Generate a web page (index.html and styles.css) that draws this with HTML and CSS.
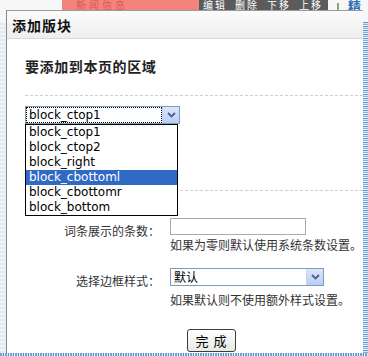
FILE: index.html
```html
<!DOCTYPE html>
<html lang="zh-CN">
<head>
  <meta charset="UTF-8" />
  <title>添加版块</title>
  <link rel="stylesheet" href="styles.css">
</head>
<body>
  <div class="page">
    <div class="topbar">
      <div class="tb-blank"></div>
      <div class="tb-news">新闻信息</div>
      <div class="tb-tools"><span>编辑</span><span>删除</span><span>下移</span><span>上移</span></div>
      <div class="tb-gap"><i class="tb-tick"></i></div>
      <div class="tb-link">精</div>
    </div>
    <div class="page-mid">
      <div class="gutter"></div>
      <div class="page-main"></div>
      <div class="stripe"></div>
    </div>
    <div class="stripe-bottom"></div>
  </div>

  <div class="dialog">
    <div class="dlg-title">添加版块</div>
    <div class="dlg-body">
      <h3 class="dlg-heading">要添加到本页的区域</h3>
      <div class="rule"></div>

      <div class="combo combo-area">
        <div class="combo-text"><span class="focus">block_ctop1</span></div>
        <div class="combo-btn"><svg width="9" height="6" viewBox="0 0 9 6"><path d="M1 1 L4.5 4.5 L8 1" fill="none" stroke="#4d6185" stroke-width="1.8"/></svg></div>
        <ul class="combo-list">
          <li>block_ctop1</li>
          <li>block_ctop2</li>
          <li>block_right</li>
          <li class="on">block_cbottoml</li>
          <li>block_cbottomr</li>
          <li>block_bottom</li>
        </ul>
      </div>

      <div class="rule rule-second"></div>

      <div class="form-row">
        <label class="form-label">词条展示的条数：</label>
        <div class="form-field">
          <div class="text-input"></div>
          <div class="hint">如果为零则默认使用系统条数设置。</div>
        </div>
      </div>

      <div class="form-row form-row-second">
        <label class="form-label">选择边框样式：</label>
        <div class="form-field">
          <div class="combo combo-style">
            <div class="combo-text">默认</div>
            <div class="combo-btn"><svg width="9" height="6" viewBox="0 0 9 6"><path d="M1 1 L4.5 4.5 L8 1" fill="none" stroke="#4d6185" stroke-width="1.8"/></svg></div>
          </div>
          <div class="hint hint-second">如果默认则不使用额外样式设置。</div>
        </div>
      </div>

      <div class="actions">
        <button class="btn">完 成</button>
      </div>
    </div>
  </div>
</body>
</html>
```

FILE: styles.css
```css
body {
  margin: 0;
  width: 368px;
  height: 356px;
  overflow: hidden;
  position: relative;
  font-family: "Noto Sans CJK SC", "DejaVu Sans", sans-serif;
  font-size: 12px;
  color: #333;
}
.page {
  height: 356px;
  display: flex;
  flex-direction: column;
  background: #f6f7f8;
}
.topbar {
  display: flex;
  height: 22px;
  font-size: 10px;
  line-height: 10px;
}
.tb-blank {
  width: 62px;
}
.tb-news {
  width: 137px;
  background: #f2837f;
  color: #dc5a56;
  padding-left: 14px;
  letter-spacing: 3px;
  box-sizing: border-box;
}
.tb-tools {
  width: 129px;
  background: #5b5b5b;
  color: #fff;
  display: flex;
  gap: 8px;
  padding-left: 4px;
  box-sizing: border-box;
  letter-spacing: 2px;
}
.tb-gap {
  width: 20px;
}
.tb-tick {
  display: block;
  width: 2px;
  height: 8px;
  margin: 3px 0 0 9px;
  background: #8fa67a;
}
.tb-link {
  color: #2f6eb3;
  font-weight: bold;
  font-size: 13px;
  line-height: 11px;
}
.page-mid {
  flex: 1;
  display: flex;
}
.gutter {
  width: 6px;
  background: repeating-linear-gradient(0deg, #e1ebf5 0 2px, #eef4fa 2px 4px);
}
.page-main {
  flex: 1;
  background: #fff;
}
.stripe {
  width: 5px;
  background: repeating-linear-gradient(0deg, #7fb0de 0 1px, #d8e8f6 1px 2px, #5f98cf 2px 3px, #eef5fb 3px 4px);
}
.stripe-bottom {
  height: 3px;
  background: repeating-linear-gradient(90deg, #6fa6da 0 2px, #d4e5f5 2px 3px, #4d8cc8 3px 4px, #f0f6fb 4px 5px);
}

/* modal dialog over the page */
.dialog {
  position: absolute;
  left: 6px;
  top: 10px;
  width: 357px;
  height: 343px;
  box-sizing: border-box;
  border-top: 1px solid #9a9a9a;
  border-left: 1px solid #888;
  background: #fff;
}
.dlg-title {
  height: 27px;
  border-bottom: 1px solid #d9d9d9;
  background: linear-gradient(#fbfbfb, #eeeeee);
  padding-left: 5px;
  font-size: 14px;
  font-weight: bold;
  letter-spacing: 1px;
  line-height: 29px;
  color: #111;
}
.dlg-body {
  padding-left: 18px;
}
.dlg-heading {
  margin: 17px 0 0;
  font-size: 14px;
  line-height: 20px;
  letter-spacing: 0.6px;
  color: #222;
}
.rule {
  margin-top: 19px;
  border-top: 1px dashed #cfcfcf;
}
.combo {
  position: relative;
  display: flex;
  height: 18px;
  box-sizing: border-box;
  border: 1px solid #7f9db9;
  background: #fff;
}
.combo-area {
  margin-top: 10px;
  width: 155px;
}
.combo-text {
  flex: 1;
  padding: 1px;
  font-family: "DejaVu Sans", sans-serif;
  color: #000;
  line-height: 14px;
}
.focus {
  display: block;
  padding-left: 2px;
  outline: 1px dotted #000;
  height: 14px;
}
.combo-btn {
  width: 16px;
  background: linear-gradient(#dbe6fd, #b9cdf7);
  border-left: 1px solid #c3d3f5;
  display: flex;
  align-items: center;
  justify-content: center;
}
.combo-list {
  position: absolute;
  left: -1px;
  top: 17px;
  width: 153px;
  box-sizing: border-box;
  margin: 0;
  padding: 0;
  list-style: none;
  border: 1px solid #000;
  background: #fff;
  font-family: "DejaVu Sans", sans-serif;
  color: #000;
}
.combo-list li {
  height: 15px;
  line-height: 15px;
  padding-left: 3px;
}
.combo-list li.on {
  background: #316ac5;
  color: #fff;
}
.rule-second {
  margin-top: 66px;
}
.form-row {
  display: grid;
  grid-template-columns: 135px 1fr;
  column-gap: 10px;
  margin-top: 27px;
}
.form-row-second {
  margin-top: 16px;
}
.form-label {
  text-align: right;
  line-height: 17px;
  padding-top: 4px;
  white-space: nowrap;
}
.text-input {
  width: 136px;
  height: 17px;
  box-sizing: border-box;
  border: 1px solid #a5acb5;
}
.hint {
  margin-top: 3px;
  line-height: 14px;
  white-space: nowrap;
}
.hint-second {
  margin-top: 7px;
}
.combo-style {
  width: 154px;
}
.combo-style .combo-text {
  font-family: "Noto Sans CJK SC", sans-serif;
  padding-left: 3px;
}
.actions {
  margin-top: 22px;
  padding-left: 162px;
}
.btn {
  width: 49px;
  height: 23px;
  border: 1px solid #3d3d3d;
  border-radius: 3px;
  background: linear-gradient(#ffffff, #e8e8e4);
  font-family: "Noto Sans CJK SC", sans-serif;
  font-size: 13px;
  color: #000;
  padding: 0;
  letter-spacing: 1px;
}
```
